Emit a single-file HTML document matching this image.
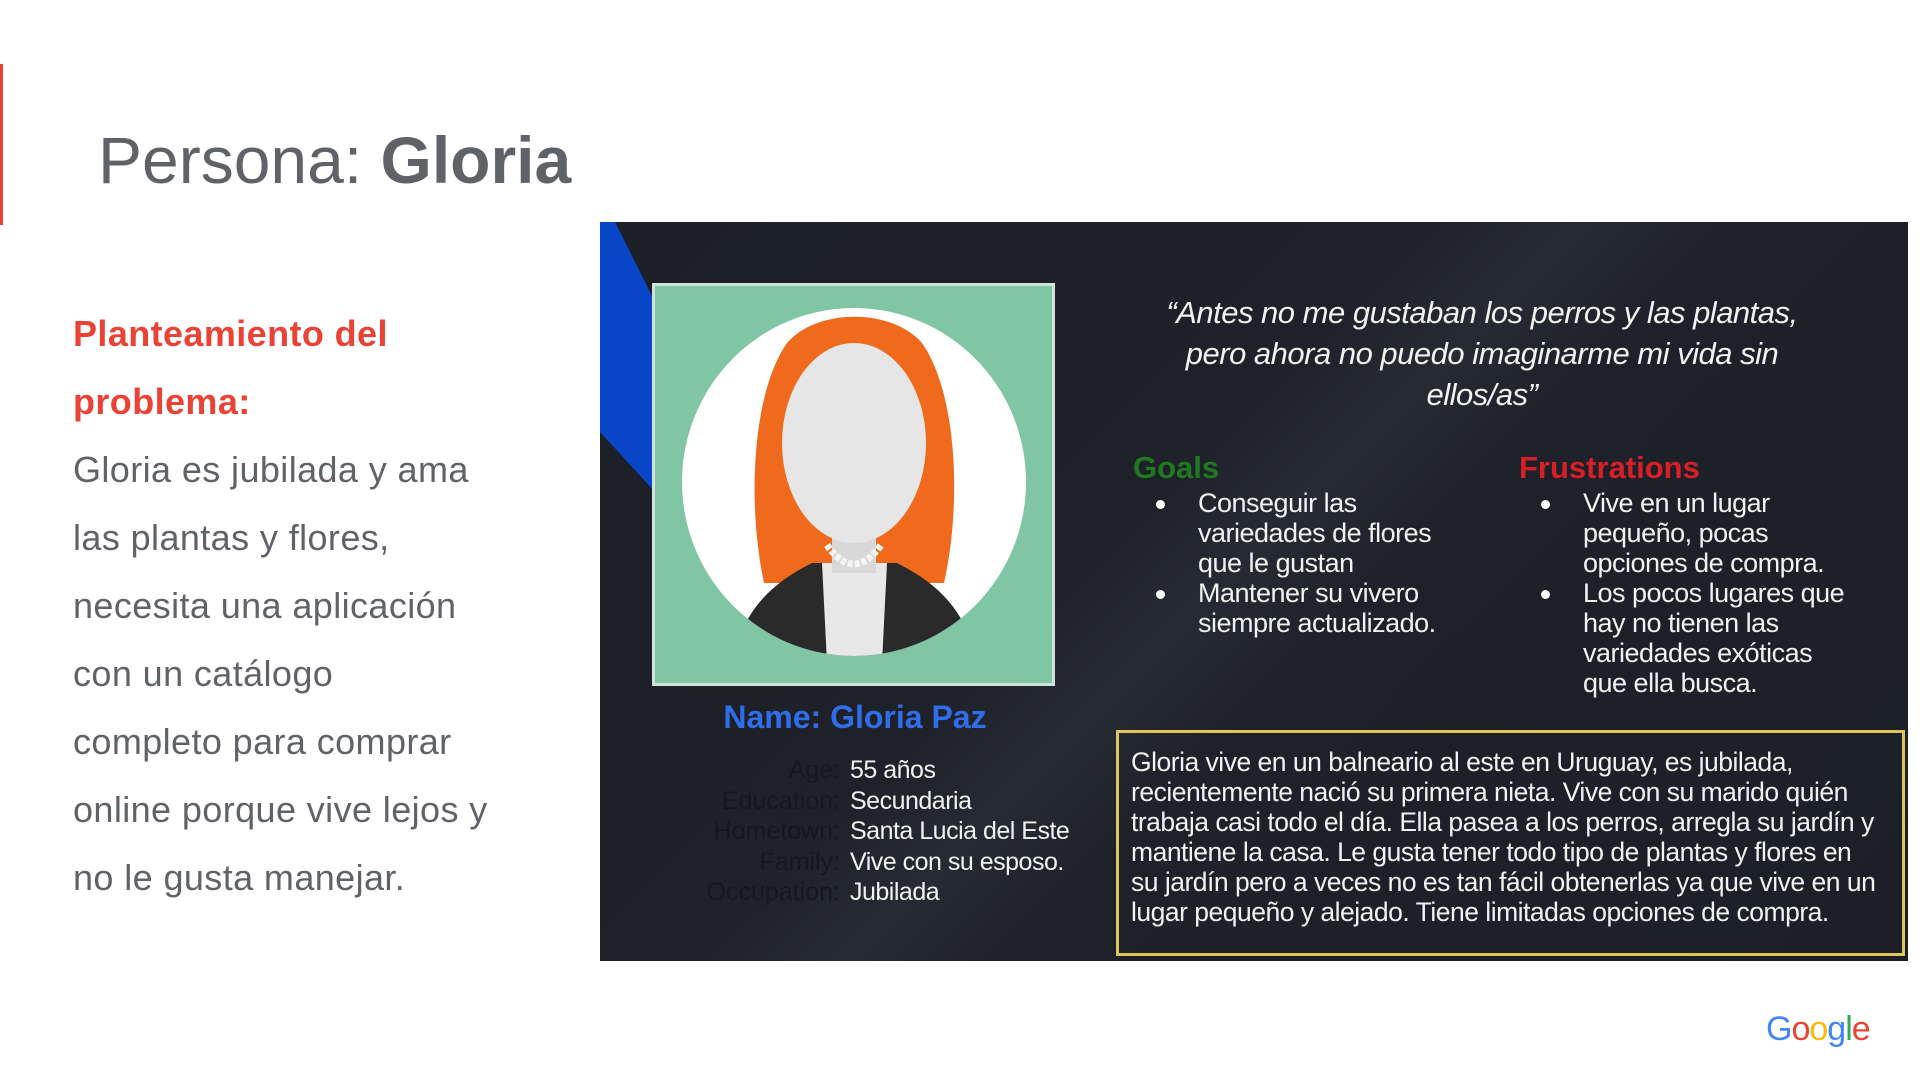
<!DOCTYPE html>
<html><head><meta charset="utf-8"><style>
*{margin:0;padding:0;box-sizing:border-box}
body{width:1920px;height:1080px;background:#fff;position:relative;overflow:hidden;font-family:"Liberation Sans",sans-serif}
.a{position:absolute}
.title{left:98px;top:122px;font-size:66px;color:#5f6368;white-space:nowrap}
.left{left:73px;top:300px;font-size:36px;line-height:68px;color:#5f6368;width:560px;letter-spacing:0.4px;white-space:nowrap}
.left b{color:#ea4335}
.panel{left:600px;top:222px;width:1308px;height:739px;background:linear-gradient(135deg,#1c1f27 0%,#1e2129 40%,#262a33 48%,#1e2129 56%,#1c1f27 100%);overflow:hidden}
.wt{color:#f2f2f2;font-size:26px;line-height:30px;letter-spacing:-0.5px}
ul{list-style:none}
li{position:relative;padding-left:48px}
li:before{content:"";position:absolute;left:6px;top:12px;width:9px;height:9px;border-radius:50%;background:#fff}
</style></head><body>
<div class="a" style="left:0;top:64px;width:3px;height:161px;background:#ea4335"></div>
<div class="a title">Persona: <b>Gloria</b></div>
<div class="a left"><b>Planteamiento del<br>problema:</b><br>Gloria es jubilada y ama<br>las plantas y flores,<br>necesita una aplicación<br>con un catálogo<br>completo para comprar<br>online porque vive lejos y<br>no le gusta manejar.</div>

<div class="a panel">
<svg class="a" style="left:0;top:0" width="80" height="320"><polygon points="0,0 15,0 55,80 55,270 0,210" fill="#0a46c8"/></svg>
<svg class="a" style="left:52px;top:61px" width="403" height="403" viewBox="0 0 403 403">
<rect x="1.5" y="1.5" width="400" height="400" fill="#80c6a4" stroke="#cfe3d8" stroke-width="3"/>
<ellipse cx="202" cy="199" rx="172" ry="174" fill="#fff"/>
<clipPath id="c"><ellipse cx="202" cy="199" rx="172" ry="174"/></clipPath>
<g clip-path="url(#c)">
<path d="M112,300 C95,220 100,110 135,60 C165,25 240,25 270,60 C305,110 310,220 292,300 Z" fill="#ef6a1c"/>
<path d="M80,390 C85,330 120,300 160,280 L245,280 C285,300 320,330 325,390 Z" fill="#2a2a2a"/>
<path d="M170,280 L235,280 L230,380 L175,380 Z" fill="#e8e8e8"/>
<rect x="180" y="220" width="44" height="70" fill="#d8d8d8"/>
<ellipse cx="202" cy="160" rx="72" ry="100" fill="#e6e6e6"/>
<path d="M175,262 Q202,300 229,262" fill="none" stroke="#f4f4f4" stroke-width="7" stroke-dasharray="5,2"/>
</g></svg>
<div class="a" style="left:0;width:510px;top:477px;text-align:center;color:#2f6ee8;font-weight:bold;font-size:32px">Name: Gloria Paz</div>
<div class="a" style="left:0;top:533px;width:240px;text-align:right;color:#15171c;font-size:25px;line-height:30.5px">Age:<br>Education:<br>Hometown:<br>Family:<br>Occupation:</div>
<div class="a wt" style="left:250px;top:533px;font-size:25px;line-height:30.5px">55 años<br>Secundaria<br>Santa Lucia del Este<br>Vive con su esposo.<br>Jubilada</div>
<div class="a wt" style="left:482px;width:800px;top:70px;text-align:center;font-style:italic;font-size:31px;line-height:41px;white-space:nowrap">“Antes no me gustaban los perros y las plantas,<br>pero ahora no puedo imaginarme mi vida sin<br>ellos/as”</div>
<div class="a" style="left:533px;top:228px;color:#1f7a1f;font-weight:bold;font-size:31px">Goals</div>
<div class="a" style="left:919px;top:228px;color:#d81f26;font-weight:bold;font-size:31px">Frustrations</div>
<ul class="a wt" style="left:550px;top:266px;width:300px;font-size:27px"><li>Conseguir las variedades de flores que le gustan</li><li>Mantener su vivero siempre actualizado.</li></ul>
<ul class="a wt" style="left:935px;top:266px;width:318px;font-size:27px"><li>Vive en un lugar pequeño, pocas opciones de compra.</li><li>Los pocos lugares que hay no tienen las variedades exóticas que ella busca.</li></ul>
<div class="a wt" style="left:516px;top:508px;width:789px;height:226px;border:3px solid #e0c65a;padding:14px 12px;font-size:26.5px;white-space:nowrap">Gloria vive en un balneario al este en Uruguay, es jubilada,<br>recientemente nació su primera nieta. Vive con su marido quién<br>trabaja casi todo el día. Ella pasea a los perros, arregla su jardín y<br>mantiene la casa. Le gusta tener todo tipo de plantas y flores en<br>su jardín pero a veces no es tan fácil obtenerlas ya que vive en un<br>lugar pequeño y alejado. Tiene limitadas opciones de compra.</div>
</div>
<div class="a" style="left:1766px;top:1010px;font-size:34px;letter-spacing:-1px"><span style="color:#4285f4">G</span><span style="color:#ea4335">o</span><span style="color:#fbbc05">o</span><span style="color:#4285f4">g</span><span style="color:#34a853">l</span><span style="color:#ea4335">e</span></div>
</body></html>
